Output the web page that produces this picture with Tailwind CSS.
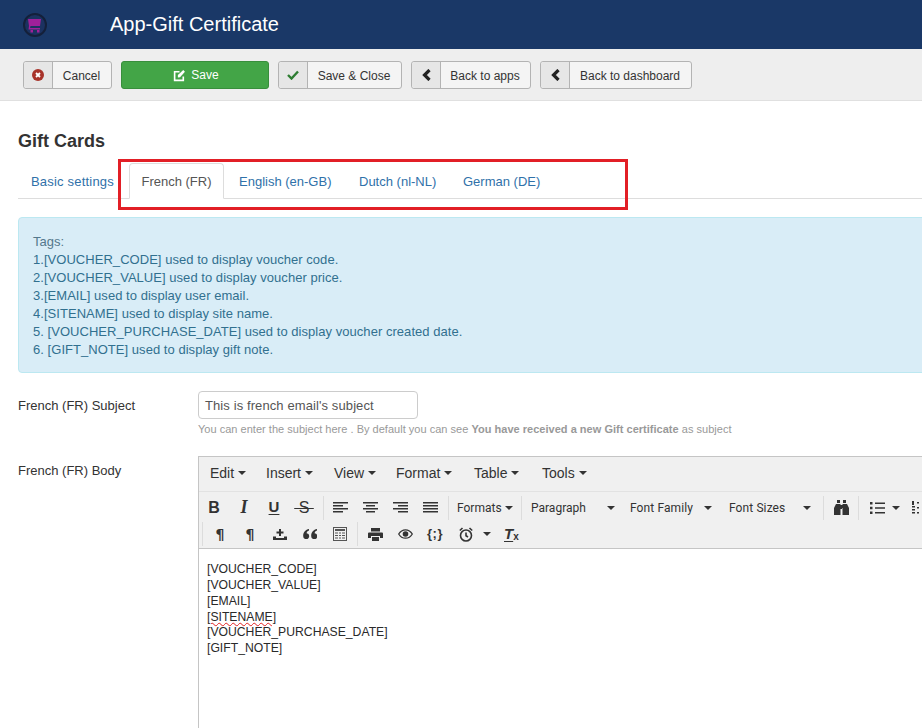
<!DOCTYPE html>
<html lang="en">
<head>
    <meta charset="UTF-8">
    <meta name="viewport" content="width=device-width, initial-scale=1.0">
    <script src="https://cdn.jsdelivr.net/npm/@tailwindcss/browser@4"></script>
    <title>App-Gift Certificate</title>
</head>
<body class="bg-white font-['Liberation_Sans',Arial,sans-serif] text-[#333] overflow-hidden">
<div class="relative w-[922px] h-[728px] overflow-hidden">

    <!-- Header -->
    <header class="h-[49px] bg-[#1a3867] flex items-center">
        <div class="ml-[23px] w-[24px] h-[24px] rounded-full border-2 border-[#14203a] bg-[#1b3260] flex items-center justify-center">
            <svg viewBox="0 0 16 16" class="w-[16px] h-[16px]" fill="#a0209a"><path d="M1 2h13l-1 7H3.500L3 11h10v1.500H1.500L2 9 1 2zM3.500 13h2.500v2.500H3.500zM10 13h2.500v2.500H10z"/></svg>
        </div>
        <h1 class="ml-[63px] mb-[2px] text-[20px] text-white">App-Gift Certificate</h1>
    </header>

    <!-- Toolbar -->
    <div class="h-[52px] bg-[#eeeeee] border-b border-[#e0e0e0] pl-[23px] pt-[12px] flex items-start gap-[9px] text-[12px]">
        <a class="h-[28px] w-[89px] flex rounded-[3px] border border-[#b3b3b3] bg-[#f4f4f4]">
            <span class="w-[29px] bg-[#e6e6e6] border-r border-[#b3b3b3] rounded-l-[3px] flex items-center justify-center">
                <svg viewBox="0 0 12 12" class="w-[12px] h-[12px]"><circle cx="6" cy="6" r="6" fill="#a8332a"/><path d="M4 4l4 4M8 4l-4 4" stroke="#fff" stroke-width="1.800"/></svg>
            </span>
            <span class="flex-1 text-center leading-[28px] pr-[1px]">Cancel</span>
        </a>
        <a class="h-[28px] w-[148px] pl-[2px] flex items-center justify-center gap-[5px] rounded-[3px] border border-[#388e3c] bg-[#43a547] text-white">
            <svg viewBox="0 0 12 12" class="w-[13px] h-[13px]" fill="none" stroke="#fff"><path d="M9.500 7v3.500h-8v-8H6" stroke-width="1.500"/><path d="M4.500 5.500L9.500 1l1.500 1.500L6.500 7.500l-2 .3z" fill="#fff" stroke="none"/></svg>
            <span class="leading-[28px]">Save</span>
        </a>
        <a class="h-[28px] w-[124px] flex rounded-[3px] border border-[#b3b3b3] bg-[#f4f4f4]">
            <span class="w-[29px] bg-[#e6e6e6] border-r border-[#b3b3b3] rounded-l-[3px] flex items-center justify-center">
                <svg viewBox="0 0 12 10" class="w-[12px] h-[10px]" fill="none" stroke="#2e7d32" stroke-width="2.400"><path d="M1 5l3.500 3.500L11 1.500"/></svg>
            </span>
            <span class="flex-1 text-center leading-[28px] pr-[1px]">Save &amp; Close</span>
        </a>
        <a class="h-[28px] w-[120px] flex rounded-[3px] border border-[#b3b3b3] bg-[#f4f4f4]">
            <span class="w-[29px] bg-[#e6e6e6] border-r border-[#b3b3b3] rounded-l-[3px] flex items-center justify-center">
                <svg viewBox="0 0 9 12" class="w-[9px] h-[12px]" fill="none" stroke="#222" stroke-width="3.200"><path d="M7.500 1L2.500 6l5 5"/></svg>
            </span>
            <span class="flex-1 text-center leading-[28px] pr-[1px]">Back to apps</span>
        </a>
        <a class="h-[28px] w-[152px] flex rounded-[3px] border border-[#b3b3b3] bg-[#f4f4f4]">
            <span class="w-[29px] bg-[#e6e6e6] border-r border-[#b3b3b3] rounded-l-[3px] flex items-center justify-center">
                <svg viewBox="0 0 9 12" class="w-[9px] h-[12px]" fill="none" stroke="#222" stroke-width="3.200"><path d="M7.500 1L2.500 6l5 5"/></svg>
            </span>
            <span class="flex-1 text-center leading-[28px] pr-[1px]">Back to dashboard</span>
        </a>
    </div>

    <!-- Main Content -->
    <main class="pl-[18px] w-[1100px]">
        <h2 class="mt-[30px] text-[18px] leading-[20px] font-bold">Gift Cards</h2>

        <div class="mt-[12px] h-[36px] border-b border-[#ddd] flex text-[13px] text-[#3071a9] w-[904px]">
            <a class="w-[111px] pl-[13px] leading-[37px] tracking-[0.2px]">Basic settings</a>
            <a class="w-[95px] h-[36px] text-center leading-[36px] text-[#555] bg-white border border-[#ddd] border-b-white rounded-t-[4px]">French (FR)</a>
            <a class="ml-[15px] w-[120px] leading-[37px]">English (en-GB)</a>
            <a class="w-[104px] leading-[37px]">Dutch (nl-NL)</a>
            <a class="leading-[37px]">German (DE)</a>
        </div>

        <div class="mt-[18px] h-[156px] w-[1000px] bg-[#d9edf7] border border-[#bce8f1] rounded-[4px] pt-[15px] pl-[14px] text-[13px] leading-[18px] tracking-[0.04px] text-[#31708f]">
            <p class="text-[#54788c]">Tags:</p>
            <p>1.[VOUCHER_CODE] used to display voucher code.</p>
            <p>2.[VOUCHER_VALUE] used to display voucher price.</p>
            <p>3.[EMAIL] used to display user email.</p>
            <p>4.[SITENAME] used to display site name.</p>
            <p>5. [VOUCHER_PURCHASE_DATE] used to display voucher created date.</p>
            <p>6. [GIFT_NOTE] used to display gift note.</p>
        </div>

        <!-- Subject -->
        <div class="mt-[18px] flex">
            <label class="w-[180px] text-[13px] pt-[6px] leading-[18px]">French (FR) Subject</label>
            <div>
                <div class="w-[220px] h-[28px] border border-[#ccc] rounded-[4px] pl-[6px] text-[13px] leading-[28px] tracking-[0.1px] text-[#555]">This is french email's subject</div>
                <p class="mt-[3px] text-[11px] leading-[14px] tracking-[0.02px] text-[#999]">You can enter the subject here . By default you can see <b>You have received a new Gift certificate</b> as subject</p>
            </div>
        </div>

        <!-- Body -->
        <div class="mt-[20px] flex">
            <label class="w-[180px] text-[13px] pt-[6px] leading-[18px]">French (FR) Body</label>
            <div class="w-[800px] h-[300px] border border-[#c5c5c5]">
                <div class="h-[35px] pb-[2px] bg-[#f0f0f0] border-b border-[#e2e2e2] pl-[11px] flex items-center text-[14px] leading-none">
                    <span class="w-[56px] flex items-center gap-[4px]">Edit <i class="block border-x-[4px] border-t-[4px] border-x-transparent border-t-[#333]"></i></span>
                    <span class="w-[68px] flex items-center gap-[4px]">Insert <i class="block border-x-[4px] border-t-[4px] border-x-transparent border-t-[#333]"></i></span>
                    <span class="w-[62px] flex items-center gap-[4px]">View <i class="block border-x-[4px] border-t-[4px] border-x-transparent border-t-[#333]"></i></span>
                    <span class="w-[78px] flex items-center gap-[4px]">Format <i class="block border-x-[4px] border-t-[4px] border-x-transparent border-t-[#333]"></i></span>
                    <span class="w-[68px] flex items-center gap-[4px]">Table <i class="block border-x-[4px] border-t-[4px] border-x-transparent border-t-[#333]"></i></span>
                    <span class="flex items-center gap-[4px]">Tools <i class="block border-x-[4px] border-t-[4px] border-x-transparent border-t-[#333]"></i></span>
                </div>

                <!-- Row 1 -->
                <div class="h-[57px] bg-[#f0f0f0] border-b border-[#c5c5c5] text-[#333]">
                    <div class="h-[29px] pt-[2px] flex items-center font-['Roboto',sans-serif] text-[12px]">
                        <span class="w-[30px] text-center font-['Liberation_Sans',sans-serif] text-[16px] font-bold">B</span>
                        <span class="w-[30px] text-center font-['Liberation_Serif',serif] text-[18px] italic font-bold">I</span>
                        <span class="w-[30px] text-center font-['Liberation_Sans',sans-serif] text-[15px] font-bold underline underline-offset-2">U</span>
                        <span class="w-[30px] text-center font-['Liberation_Sans',sans-serif] text-[16px] line-through">&nbsp;S&nbsp;</span>
                        <i class="ml-[4px] mr-[1px] w-px h-[24px] bg-[#dcdcdc]"></i>
                        <span class="w-[30px] flex justify-center"><svg viewBox="0 0 15 11" class="w-[15px] h-[11px]" fill="#333"><path d="M0 0h15v1.600H0zM0 3h10v1.600H0zM0 6h15v1.600H0zM0 9h10v1.600H0z"/></svg></span>
                        <span class="w-[30px] flex justify-center"><svg viewBox="0 0 15 11" class="w-[15px] h-[11px]" fill="#333"><path d="M0 0h15v1.600H0zM3 3h9v1.600H3zM0 6h15v1.600H0zM3 9h9v1.600H3z"/></svg></span>
                        <span class="w-[30px] flex justify-center"><svg viewBox="0 0 15 11" class="w-[15px] h-[11px]" fill="#333"><path d="M0 0h15v1.600H0zM5 3h10v1.600H5zM0 6h15v1.600H0zM5 9h10v1.600H5z"/></svg></span>
                        <span class="w-[30px] flex justify-center"><svg viewBox="0 0 15 11" class="w-[15px] h-[11px]" fill="#333"><path d="M0 0h15v1.600H0zM0 3h15v1.600H0zM0 6h15v1.600H0zM0 9h15v1.600H0z"/></svg></span>
                        <i class="ml-[3px] w-px h-[24px] bg-[#dcdcdc]"></i>
                        <span class="ml-[8px] w-[64px] flex items-center gap-[3px]">Formats <i class="block border-x-[4px] border-t-[4px] border-x-transparent border-t-[#333]"></i></span>
                        <i class="w-px h-[24px] bg-[#dcdcdc]"></i>
                        <span class="ml-[9px] w-[99px] flex items-center justify-between pr-[15px]">Paragraph <i class="block border-x-[4px] border-t-[4px] border-x-transparent border-t-[#333]"></i></span>
                        <span class="w-[99px] flex items-center justify-between pr-[17px] tracking-[0.1px]">Font Family <i class="block border-x-[4px] border-t-[4px] border-x-transparent border-t-[#333]"></i></span>
                        <span class="w-[94px] flex items-center justify-between pr-[12px] tracking-[0.1px]">Font Sizes <i class="block border-x-[4px] border-t-[4px] border-x-transparent border-t-[#333]"></i></span>
                        <i class="w-px h-[24px] bg-[#dcdcdc]"></i>
                        <span class="w-[34px] flex justify-center"><svg viewBox="0 0 15 15" class="w-[15px] h-[15px]" fill="#333"><path d="M3 0h3v3H3zM9 0h3v3H9zM2 4h4.500v11H0V8zM8.500 4H13l2 4v7H8.500zM6.500 5h2v4h-2z"/></svg></span>
                        <i class="w-px h-[24px] bg-[#dcdcdc]"></i>
                        <span class="ml-[11px] w-[15px] flex"><svg viewBox="0 0 15 12" class="w-[15px] h-[12px]" fill="#333"><path d="M0 0h2.500v2.500H0zM0 4.700h2.500v2.500H0zM0 9.400h2.500V12H0zM5 .5h10v1.600H5zM5 5.200h10v1.600H5zM5 10h10v1.600H5z"/></svg></span>
                        <i class="ml-[7px] block border-x-[4px] border-t-[4px] border-x-transparent border-t-[#333]"></i>
                        <span class="ml-[11px] w-[8px] flex"><svg viewBox="0 0 8 14" class="w-[8px] h-[14px]" fill="#333"><path d="M1 0h2v4H1zM1 5h3v1.500H1zM1 8h3v1.500H1zM1 11h3v1.500H1zM6 1h2v1.500H6zM6 6h2v1.500H6zM6 11h2v1.500H6z"/></svg></span>
                    </div>
                    <div class="h-[26px] flex items-center">
                        <i class="ml-[3px] w-px h-[24px] bg-[#dcdcdc]"></i>
                        <span class="w-[32px] pl-[2px] text-center font-['DejaVu_Sans',sans-serif] text-[14px] font-bold">¶</span>
                        <span class="w-[30px] text-center font-['DejaVu_Sans',sans-serif] text-[14px] font-bold">¶</span>
                        <span class="w-[30px] flex justify-center"><svg viewBox="0 0 14 11" class="w-[14px] h-[11px]" fill="#333"><path d="M6 0h2v2.500h2.500v2H8V7H6V4.500H3.500v-2H6zM0 7.500h3v1.500h8V7.500h3V11H0z"/></svg></span>
                        <span class="w-[30px] flex justify-center"><svg viewBox="0 0 14 10" class="w-[14px] h-[10px]" fill="#333"><path d="M6 0v1.500C4.500 2 3.800 3 3.600 4.200A3 3 0 1 1 .2 7C0 3.500 2.500.5 6 0zM14 0v1.500C12.500 2 11.800 3 11.600 4.200A3 3 0 1 1 8.200 7C8 3.500 10.500.5 14 0z"/></svg></span>
                        <span class="w-[30px] flex justify-center"><svg viewBox="0 0 14 14" class="w-[14px] h-[14px]" fill="#555"><path fill-rule="evenodd" d="M0 0h14v14H0zM1 1v12h12V1z"/><path d="M2 2h10v2H2zM2 5.500h3v1H2zM6 5.500h2v1H6zM9 5.500h3v1H9zM2 8h3v1H2zM6 8h2v1H6zM9 8h3v1H9zM2 10.500h3v1H2zM6 10.500h2v1H6zM9 10.500h3v1H9z"/></svg></span>
                        <i class="ml-[2px] mr-[2px] w-px h-[24px] bg-[#dcdcdc]"></i>
                        <span class="w-[30px] flex justify-center"><svg viewBox="0 0 15 13" class="w-[15px] h-[13px]" fill="#333"><path d="M3 0h9v3.500H3zM1 4.500h13a1 1 0 0 1 1 1V10h-3V8H3v2H0V5.500a1 1 0 0 1 1-1zM4 9h7v4H4z"/></svg></span>
                        <span class="w-[30px] flex justify-center"><svg viewBox="0 0 15 10" class="w-[15px] h-[10px]"><path d="M.7 5C2.500 2 5 .8 7.500.8S12.500 2 14.300 5c-1.800 3-4.300 4.200-6.800 4.200S2.500 8 .7 5z" fill="none" stroke="#333" stroke-width="1.300"/><circle cx="7.500" cy="5" r="2.800" fill="#333"/></svg></span>
                        <span class="w-[30px] text-center text-[13px] font-bold tracking-[0.5px]">{;}</span>
                        <span class="w-[31px] flex justify-center"><svg viewBox="0 0 14 15" class="w-[14px] h-[15px]" fill="none" stroke="#333" stroke-width="1.600"><circle cx="7" cy="8.500" r="5.500"/><path d="M7 5.500v3.200l2 1.300M.8 3.500L3.500 1M13.200 3.500L10.500 1"/></svg></span>
                        <i class="ml-[2px] block border-x-[4px] border-t-[4px] border-x-transparent border-t-[#333]"></i>
                        <span class="ml-[13px] text-[15px] font-bold italic underline underline-offset-2">T</span><span class="text-[10px] font-bold mt-[4px]">x</span>
                    </div>
                </div>

                <!-- Editor content -->
                <div class="pt-[13.2px] pl-[8px] text-[12.2px] leading-[15.8px] text-[#2a2a2a]">
                    <p>[VOUCHER_CODE]</p>
                    <p>[VOUCHER_VALUE]</p>
                    <p>[EMAIL]</p>
                    <p class="underline decoration-wavy decoration-[#e02020] decoration-1 underline-offset-[1px] w-max">[SITENAME]</p>
                    <p>[VOUCHER_PURCHASE_DATE]</p>
                    <p>[GIFT_NOTE]</p>
                </div>
            </div>
        </div>
    </main>

    <!-- Red highlight around the language tabs -->
    <div class="absolute left-[118px] top-[159px] w-[510px] h-[51px] border-[3px] border-[#e21f26]"></div>
</div>
</body>
</html>
